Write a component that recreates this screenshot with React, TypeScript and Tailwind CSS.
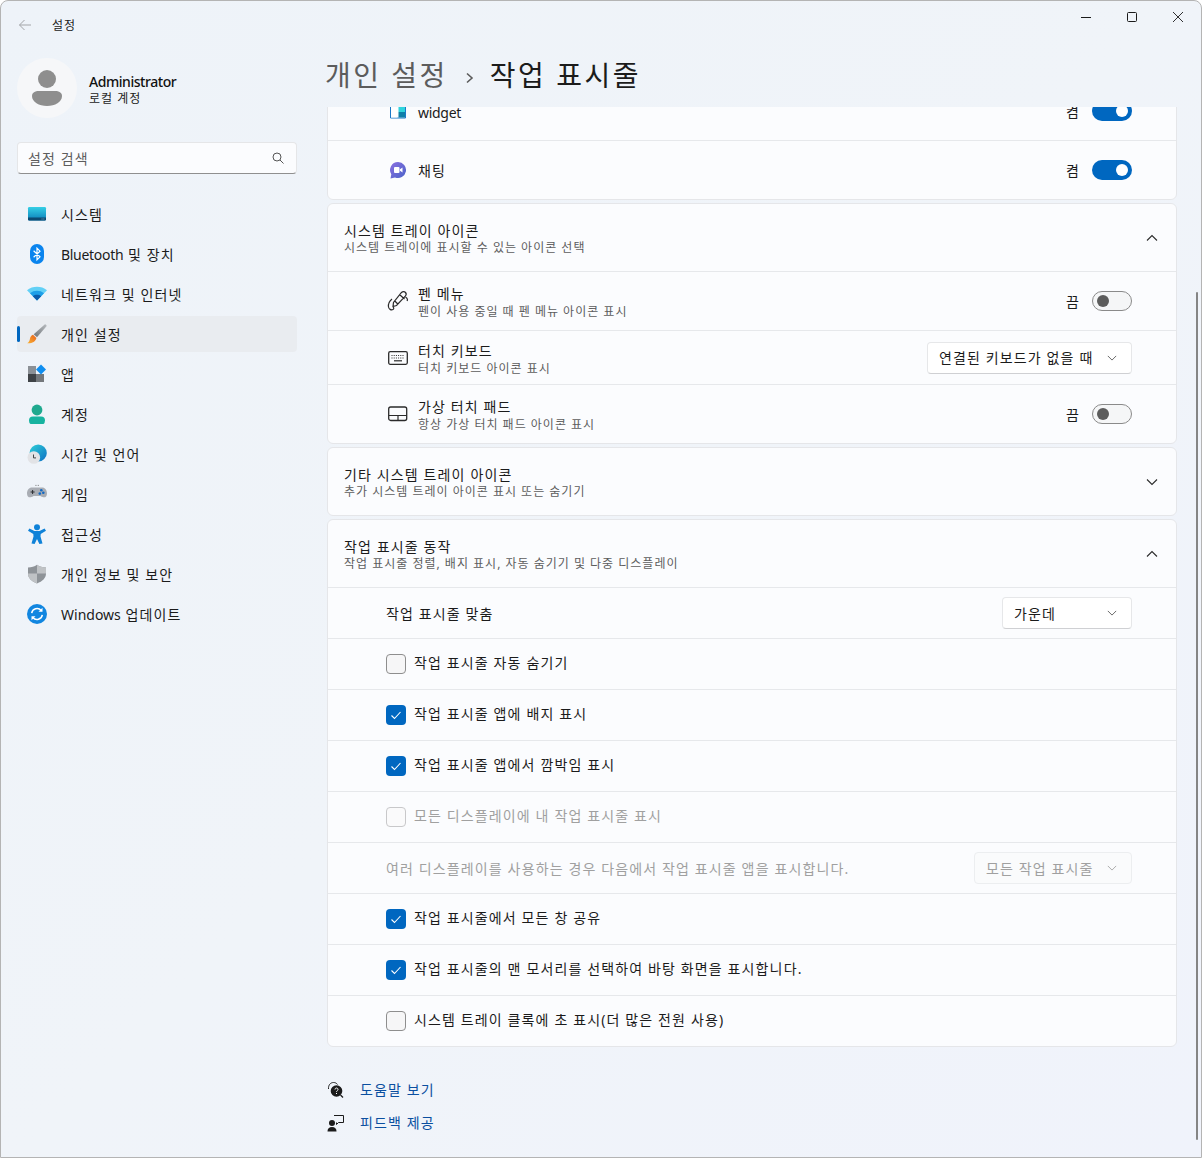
import type { ReactNode } from 'react';

const FONT = 'font-["Noto_Sans","Noto_Sans_CJK_KR",sans-serif]';

const SystemIcon = () => (
    <svg width="20" height="20" viewBox="0 0 20 20">
        <defs>
            <linearGradient id="sys" x1="0" y1="0" x2="0" y2="1">
                <stop offset="0" stopColor="#35cfe6" />
                <stop offset="1" stopColor="#0b7db8" />
            </linearGradient>
        </defs>
        <rect x="1" y="3" width="18" height="13.5" rx="1.2" fill="url(#sys)" />
        <path d="M1 13.500h18v1.800a1.200 1.200 0 0 1-1.200 1.200H2.200A1.200 1.200 0 0 1 1 15.300z" fill="#0c4a72" />
        <path d="M14.600 15h.9M16.400 15h.9" stroke="#8fc6dc" strokeWidth="0.8" />
    </svg>
);

const BluetoothIcon = () => (
    <svg width="20" height="20" viewBox="0 0 20 20">
        <rect x="3" y="0" width="14" height="20" rx="7" fill="#0a84ee" />
        <path d="M6.600 6.700 13 12.800 10 15.800V4.200l3 3L6.600 13.300" fill="none" stroke="#fff" strokeWidth="1.200" />
    </svg>
);

const WifiIcon = () => (
    <svg width="20" height="20" viewBox="0 0 20 20">
        <path d="M0 6.200C5.500 1.600 14.500 1.600 20 6.200L10 16.500z" fill="#62d0f6" />
        <path d="M3 9.300C7 6 13 6 17 9.300L10 16.500z" fill="#1e9fe8" />
        <path d="M5.800 12.200C8.200 10.300 11.800 10.300 14.200 12.200L10 16.500z" fill="#0c5cab" />
    </svg>
);

const BrushIcon = () => (
    <svg width="20" height="20" viewBox="0 0 20 20">
        <defs>
            <linearGradient id="handle" x1="0" y1="1" x2="1" y2="0">
                <stop offset="0" stopColor="#6f7478" />
                <stop offset="1" stopColor="#b8bcc0" />
            </linearGradient>
            <linearGradient id="bristle" x1="0" y1="1" x2="1" y2="0">
                <stop offset="0" stopColor="#f9b233" />
                <stop offset="1" stopColor="#e8611c" />
            </linearGradient>
        </defs>
        <path d="M18 0.200c1 .3 1.600 1 1.700 1.700L10 13.200 6.700 10.200z" fill="url(#handle)" />
        <path d="M6 10.800 9.400 13.900C8.600 17.600 4.600 19.600 0.200 19.200 2.400 17.800 2.600 16.400 3 14.400 3.300 12.700 4.400 11.400 6 10.800z" fill="url(#bristle)" />
    </svg>
);

const AppsIcon = () => (
    <svg width="20" height="20" viewBox="0 0 20 20">
        <rect x="1" y="2" width="8" height="8" fill="#8b9096" />
        <rect x="1" y="10" width="8" height="8" fill="#3f4347" />
        <rect x="9" y="10" width="8" height="8" fill="#74787c" />
        <path d="M14 0.500 19 5.500 14 10.500 9 5.500z" fill="#0f8ef0" />
    </svg>
);

const AccountIcon = () => (
    <svg width="20" height="20" viewBox="0 0 20 20">
        <circle cx="10" cy="6" r="5.400" fill="#1fa98f" />
        <rect x="2" y="12.600" width="16" height="8" rx="4" fill="#17b3a0" />
    </svg>
);

const TimeIcon = () => (
    <svg width="20" height="20" viewBox="0 0 20 20">
        <defs>
            <linearGradient id="globe" x1="0" y1="0" x2="1" y2="1">
                <stop offset="0" stopColor="#2fd0d8" />
                <stop offset="1" stopColor="#0d6fc4" />
            </linearGradient>
        </defs>
        <circle cx="11.200" cy="9" r="8.600" fill="url(#globe)" />
        <circle cx="6.800" cy="13.500" r="6.300" fill="#e2e3e6" />
        <path d="M6.500 10.500v3.400h2.500" fill="none" stroke="#444" strokeWidth="1" />
    </svg>
);

const GameIcon = () => (
    <svg width="20" height="20" viewBox="0 0 20 20">
        <path d="M5 3.400h10c3 0 5 2.600 5 6 0 3.200-2.200 4.600-4.400 3.700-1.200-.5-1.800-1.200-3-1.200H7.400c-1.200 0-1.800.7-3 1.200C2.200 14 0 12.600 0 9.400c0-3.400 2-6 5-6z" fill="#a9adb4" />
        <path d="M3.600 8h4M5.600 6v4" stroke="#2c2f33" strokeWidth="1" />
        <circle cx="14.300" cy="6.300" r="1.300" fill="#1269c4" />
        <circle cx="12.800" cy="9.600" r="1.300" fill="#1269c4" />
        <circle cx="16.300" cy="8.800" r="1.300" fill="#1269c4" />
        <path d="M8.500 1.400h.9M10.800 1.400h.9" stroke="#555" strokeWidth="0.900" />
    </svg>
);

const AccessIcon = () => (
    <svg width="20" height="20" viewBox="0 0 20 20">
        <circle cx="10" cy="3.200" r="3" fill="#0f82d8" />
        <path d="M2.400 4.600 1 6.800 6.300 10 6.500 12.500 4.500 19.400 7.600 20 10 15 12.400 20 15.500 19.400 13.500 12.500 13.700 10 19 6.800 17.600 4.600 12.500 7H7.500z" fill="#0f82d8" />
    </svg>
);

const ShieldIcon = () => (
    <svg width="20" height="20" viewBox="0 0 20 20">
        <path d="M10 0.800C12.500 2.600 15.500 3.400 19 3.400V9.500C19 14 15.500 17.500 10 19.400 4.500 17.500 1 14 1 9.500V3.400C4.500 3.400 7.500 2.600 10 0.800z" fill="#8e9398" />
        <path d="M10 0.800C12.500 2.600 15.500 3.400 19 3.400V9.500H10zM10 9.500V19.400C4.500 17.500 1 14 1 9.500z" fill="#bfc2c5" />
    </svg>
);

const UpdateIcon = () => (
    <svg width="20" height="20" viewBox="0 0 20 20">
        <circle cx="10" cy="10" r="10" fill="#1186e0" />
        <path d="M4.700 9.200A5.400 5.400 0 0 1 14.200 6.500M15.300 10.800A5.400 5.400 0 0 1 5.800 13.500" fill="none" stroke="#fff" strokeWidth="1.500" />
        <path d="M15.500 3.800V7.800H11.500zM4.500 16.200V12.200H8.500z" fill="#fff" />
    </svg>
);

const navItems: { label: ReactNode; key: string; icon: ReactNode; active?: boolean }[] = [
    { key: 'system', label: '시스템', icon: <SystemIcon /> },
    {
        key: 'bluetooth',
        label: (
            <>
                <span className="tracking-[-0.3px]">Bluetooth</span> 및 장치
            </>
        ),
        icon: <BluetoothIcon />,
    },
    { key: 'network', label: '네트워크 및 인터넷', icon: <WifiIcon /> },
    { key: 'personal', label: '개인 설정', icon: <BrushIcon />, active: true },
    { key: 'apps', label: '앱', icon: <AppsIcon /> },
    { key: 'account', label: '계정', icon: <AccountIcon /> },
    { key: 'time', label: '시간 및 언어', icon: <TimeIcon /> },
    { key: 'game', label: '게임', icon: <GameIcon /> },
    { key: 'access', label: '접근성', icon: <AccessIcon /> },
    { key: 'privacy', label: '개인 정보 및 보안', icon: <ShieldIcon /> },
    {
        key: 'update',
        label: (
            <>
                <span className="tracking-normal">Windows</span> 업데이트
            </>
        ),
        icon: <UpdateIcon />,
    },
];

const Chevron = ({ up, className }: { up?: boolean; className: string }) => (
    <svg width="12" height="12" viewBox="0 0 12 12" className={className}>
        <path d={up ? 'M1 8.500 6 3.500l5 5' : 'M1 3.500l5 5 5-5'} fill="none" stroke="currentColor" strokeWidth="1.100" />
    </svg>
);

const Toggle = ({ on }: { on: boolean }) => (
    <div className="flex items-center">
        <span className="w-[26px] text-[14px] text-[#1b1b1b]">{on ? '켬' : '끔'}</span>
        {on ? (
            <div className="flex h-5 w-10 items-center justify-end rounded-full bg-[#0067c0] pr-1">
                <div className="h-3 w-3 rounded-full bg-white" />
            </div>
        ) : (
            <div className="flex h-5 w-10 items-center rounded-full border border-[#8a8a8a] bg-[#f5f6f7] pl-[4px]">
                <div className="h-3 w-3 rounded-full bg-[#5c5c5c]" />
            </div>
        )}
    </div>
);

const Select = ({ label, width, disabled }: { label: string; width: string; disabled?: boolean }) => (
    <div
        className={`flex h-8 items-center justify-between rounded border pl-[11px] pr-[14px] text-[14px] ${width} ${
            disabled
                ? 'border-[#eceef0] bg-[#fafbfc] text-[#a0a0a0]'
                : 'border-[#e6e7e9] border-b-[#cfd0d3] bg-white text-[#1b1b1b]'
        }`}
    >
        <span>{label}</span>
        <Chevron className={`h-[10px] w-[10px] ${disabled ? 'text-[#a5a5a5]' : 'text-[#5d5d5d]'}`} />
    </div>
);

const Check = ({ state }: { state: 'on' | 'off' | 'disabled' }) => {
    if (state === 'on') {
        return (
            <div className="flex h-5 w-5 items-center justify-center rounded bg-[#0067c0]">
                <svg width="12" height="12" viewBox="0 0 12 12">
                    <path d="M1.500 6.500 4.500 9.500 10.500 3" fill="none" stroke="#fff" strokeWidth="1.100" />
                </svg>
            </div>
        );
    }
    return (
        <div className={`h-5 w-5 rounded border ${state === 'off' ? 'border-[#8e8e8e] bg-[#f6f6f7]' : 'border-[#c8c8ca] bg-[#fafafb]'}`} />
    );
};

const CardHeader = ({ title, sub, up }: { title: string; sub: string; up?: boolean }) => (
    <div className="flex h-[67px] items-center justify-between pl-4 pr-[18px]">
        <div className="pt-px">
            <div className="text-[14px] leading-[18px] text-[#1b1b1b]">{title}</div>
            <div className="text-[12px] leading-[15px] tracking-[1px] text-[#5d5d5d]">{sub}</div>
        </div>
        <Chevron up={up} className="text-[#2b2b2b]" />
    </div>
);

const IconRow = ({ icon, title, sub, h, right }: { icon: ReactNode; title: string; sub?: string; h: string; right: ReactNode }) => (
    <div className={`flex items-center justify-between border-t border-[#e6e8eb] pl-[60px] pr-[44px] ${h}`}>
        <div className="flex items-center">
            <div className="mr-[10px] flex h-5 w-5 items-center justify-center">{icon}</div>
            <div className="pt-[2px]">
                <div className="text-[14px] leading-[18px] text-[#1b1b1b]">{title}</div>
                {sub && <div className="mt-px text-[12px] leading-[15px] tracking-[1px] text-[#5d5d5d]">{sub}</div>}
            </div>
        </div>
        {right}
    </div>
);

const CheckRow = ({ state, label }: { state: 'on' | 'off' | 'disabled'; label: string }) => (
    <div className="flex h-[51px] items-center gap-2 border-t border-[#e6e8eb] pl-[58px]">
        <Check state={state} />
        <span className={`pb-[3px] text-[14px] ${state === 'disabled' ? 'text-[#a0a0a0]' : 'text-[#1b1b1b]'}`}>{label}</span>
    </div>
);

const App = () => {
    return (
        <div className={`relative flex h-[1158px] w-[1202px] overflow-hidden rounded-t-lg border border-[#b4b4b4] bg-[linear-gradient(135deg,#eef3f9,#f0f4f9_50%,#f0f3fb)] tracking-[1.13px] ${FONT}`}>
            {/* 左サイドバー */}
            <aside className="flex w-[326px] shrink-0 flex-col">
                <div className="flex h-[48px] items-center pl-[17px]">
                    <svg width="14" height="14" viewBox="0 0 14 14" className="mr-[20px]">
                        <path d="M13 7H1.500M6.500 2 1.500 7l5 5" fill="none" stroke="#a3a5a8" strokeWidth="1" />
                    </svg>
                    <span className="pt-[2px] text-[12px] tracking-[1px] text-[#1b1b1b]">설정</span>
                </div>
                <div className="mt-[9px] flex items-center pl-4">
                    <div className="flex h-[60px] w-[60px] items-center justify-center rounded-full bg-[#f6f7f9]">
                        <svg width="30" height="36" viewBox="0 0 30 36">
                            <circle cx="15" cy="9" r="9" fill="#8e8e8e" />
                            <path d="M7 21h16c4 0 7 1.500 7 5 0 6-7 10-15 10S0 32 0 26c0-3.500 3-5 7-5z" fill="#8e8e8e" />
                        </svg>
                    </div>
                    <div className="ml-3 pt-[3px]">
                        <div className="text-[14px] font-medium leading-[17px] tracking-[-0.45px] text-[#111]">Administrator</div>
                        <div className="mt-px text-[12px] leading-[15px] tracking-[1px] text-[#1b1b1b]">로컬 계정</div>
                    </div>
                </div>
                <div className="ml-4 mr-[30px] mt-6 flex h-8 items-center justify-between rounded border border-[#e5e6e8] border-b-[#8f8f8f] bg-[#fbfcfe] pl-[10px] pr-3">
                    <span className="text-[14px] text-[#5d5d5d]">설정 검색</span>
                    <svg width="12" height="12" viewBox="0 0 12 12">
                        <circle cx="5" cy="5" r="4" fill="none" stroke="#555" strokeWidth="1" />
                        <path d="M8 8l3.500 3.500" stroke="#555" strokeWidth="1" />
                    </svg>
                </div>
                <nav className="ml-4 mr-[30px] mt-[20px] flex flex-col">
                    {navItems.map((item) => (
                        <div key={item.key} className="flex h-10 items-center">
                            <div className={`relative flex h-9 w-full items-center rounded pl-[10px] ${item.active ? 'bg-[#e9ecf0]' : ''}`}>
                                {item.active && <div className="absolute left-0 top-[10px] h-4 w-[3px] rounded-full bg-[#0067c0]" />}
                                {item.icon}
                                <span className="ml-[14px] text-[14px] text-[#1b1b1b]">{item.label}</span>
                            </div>
                        </div>
                    ))}
                </nav>
            </aside>

            {/* メイン */}
            <main className="flex min-w-0 flex-1 flex-col pr-6">
                <div className="-ml-[2px] flex h-[106px] shrink-0 items-end pb-[13px] text-[28px] leading-[38px] tracking-[2.5px]">
                    <span className="text-[#5c5c5c]">개인 설정</span>
                    <svg width="12" height="12" viewBox="0 0 12 12" className="mb-[10px] ml-[16px] mr-[14px]">
                        <path d="M3 1.500 8 6 3 10.500" fill="none" stroke="#5c5c5c" strokeWidth="1.600" />
                    </svg>
                    <span className="text-[#1b1b1b]">작업 표시줄</span>
                </div>
                <div className="min-h-0 flex-1 overflow-hidden">
                    {/* スクロール位置の分だけ上にずらす */}
                    <div className="-mt-[26px] flex flex-col gap-[3px]">
                        <div className="rounded-b-md border border-[#e5e6e9] bg-[#fbfcfe]">
                            <div className="flex h-[58px] items-center justify-between pl-[60px] pr-[44px]">
                                <div className="flex items-center">
                                    <svg width="20" height="20" viewBox="0 0 20 20" className="mr-[10px]">
                                        <path d="M2.500 3v14h15V3" fill="none" stroke="#1a78c8" strokeWidth="1" />
                                        <rect x="3" y="3" width="6.500" height="13.500" fill="#fff" />
                                        <rect x="10.500" y="3" width="6.500" height="8" fill="#2fd4dd" />
                                        <rect x="10.500" y="11" width="6.500" height="5.500" fill="#0f7fa8" />
                                    </svg>
                                    <span className="pt-[3px] text-[14px] leading-none tracking-[-0.3px] text-[#1b1b1b]">widget</span>
                                </div>
                                <Toggle on />
                            </div>
                            <IconRow
                                h="h-[59px]"
                                title="채팅"
                                icon={
                                    <svg width="18" height="18" viewBox="0 0 18 18">
                                        <defs>
                                            <linearGradient id="chat" x1="0" y1="0" x2="1" y2="1">
                                                <stop offset="0" stopColor="#8a6fe0" />
                                                <stop offset="1" stopColor="#4a63c8" />
                                            </linearGradient>
                                        </defs>
                                        <path d="M9 1a8 8 0 1 1-3 15.400L1.500 17.500 2.300 13.300A8 8 0 0 1 9 1z" fill="url(#chat)" />
                                        <rect x="5" y="6" width="5.500" height="6" rx="1" fill="#fff" />
                                        <path d="M11 8.200 13.500 6.500v5L11 9.800z" fill="#fff" />
                                    </svg>
                                }
                                right={<Toggle on />}
                            />
                        </div>

                        <div className="rounded-md border border-[#e5e6e9] bg-[#fbfcfe]">
                            <CardHeader up title="시스템 트레이 아이콘" sub="시스템 트레이에 표시할 수 있는 아이콘 선택" />
                            <IconRow
                                h="h-[59px]"
                                title="펜 메뉴"
                                sub="펜이 사용 중일 때 펜 메뉴 아이콘 표시"
                                icon={
                                    <svg width="22" height="22" viewBox="0 0 22 22" className="shrink-0">
                                        <path d="M14.500 2.500c1.200-1.200 3-1.200 4 0s.8 2.600-.2 3.700L9.500 15.500 6 16.500 6.500 12.500z M12.500 4.500l5 4.500M7.800 11l3 3" fill="none" stroke="#2b2b2b" strokeWidth="1.200" />
                                        <path d="M5 9C2.500 11 1 14 1.500 17c.3 2 2.500 3.500 4.500 2.500 1-.5 1-2 0-2.500" fill="none" stroke="#2b2b2b" strokeWidth="1.200" />
                                        <path d="M18.500 7c1.500 1 2.500 2.500 1.500 4" fill="none" stroke="#2b2b2b" strokeWidth="1.200" />
                                    </svg>
                                }
                                right={<Toggle on={false} />}
                            />
                            <IconRow
                                h="h-[54px]"
                                title="터치 키보드"
                                sub="터치 키보드 아이콘 표시"
                                icon={
                                    <svg width="20" height="20" viewBox="0 0 20 20">
                                        <rect x="0.700" y="3.700" width="18.600" height="12.600" rx="1.500" fill="none" stroke="#2b2b2b" strokeWidth="1.300" />
                                        <path d="M3.500 7.500h13M3.500 10h13" stroke="#2b2b2b" strokeWidth="1.200" strokeDasharray="1 1.200" />
                                        <path d="M6 12.800h8" stroke="#2b2b2b" strokeWidth="1.200" />
                                    </svg>
                                }
                                right={<Select label="연결된 키보드가 없을 때" width="w-[205px]" />}
                            />
                            <IconRow
                                h="h-[59px]"
                                title="가상 터치 패드"
                                sub="항상 가상 터치 패드 아이콘 표시"
                                icon={
                                    <svg width="20" height="20" viewBox="0 0 20 20">
                                        <rect x="0.700" y="3" width="18" height="13.500" rx="2" fill="none" stroke="#2b2b2b" strokeWidth="1.300" />
                                        <path d="M1 11.500h18M10 11.500v5" stroke="#2b2b2b" strokeWidth="1.200" />
                                    </svg>
                                }
                                right={<Toggle on={false} />}
                            />
                        </div>

                        <div className="rounded-md border border-[#e5e6e9] bg-[#fbfcfe]">
                            <CardHeader title="기타 시스템 트레이 아이콘" sub="추가 시스템 트레이 아이콘 표시 또는 숨기기" />
                        </div>

                        <div className="rounded-md border border-[#e5e6e9] bg-[#fbfcfe]">
                            <CardHeader up title="작업 표시줄 동작" sub="작업 표시줄 정렬, 배지 표시, 자동 숨기기 및 다중 디스플레이" />
                            <div className="flex h-[51px] items-center justify-between border-t border-[#e6e8eb] pl-[58px] pr-[44px]">
                                <span className="text-[14px] text-[#1b1b1b]">작업 표시줄 맞춤</span>
                                <Select label="가운데" width="w-[130px]" />
                            </div>
                            <CheckRow state="off" label="작업 표시줄 자동 숨기기" />
                            <CheckRow state="on" label="작업 표시줄 앱에 배지 표시" />
                            <CheckRow state="on" label="작업 표시줄 앱에서 깜박임 표시" />
                            <CheckRow state="disabled" label="모든 디스플레이에 내 작업 표시줄 표시" />
                            <div className="flex h-[51px] items-center justify-between border-t border-[#e6e8eb] pl-[58px] pr-[44px]">
                                <span className="text-[14px] text-[#a0a0a0]">여러 디스플레이를 사용하는 경우 다음에서 작업 표시줄 앱을 표시합니다.</span>
                                <Select disabled label="모든 작업 표시줄" width="w-[158px]" />
                            </div>
                            <CheckRow state="on" label="작업 표시줄에서 모든 창 공유" />
                            <CheckRow state="on" label="작업 표시줄의 맨 모서리를 선택하여 바탕 화면을 표시합니다." />
                            <CheckRow state="off" label="시스템 트레이 클록에 초 표시(더 많은 전원 사용)" />
                        </div>

                        <div className="mt-[23px] flex flex-col">
                            <div className="flex h-[33px] items-center">
                                <svg width="18" height="18" viewBox="0 0 18 18" className="mr-[15px]">
                                    <path d="M1.500 8C1.200 4 3.500 1.500 6.500 1.500c1.800 0 3 .7 4 2" fill="none" stroke="#222" strokeWidth="1" />
                                    <circle cx="9.500" cy="10" r="5.800" fill="#1b1b1b" />
                                    <path d="M13.500 14l2.500 2.500" stroke="#1b1b1b" strokeWidth="1.200" />
                                    <path d="M8 8.500c0-2 3-2 3 0 0 1.200-1.500 1.200-1.500 2.400M9.500 12v1" fill="none" stroke="#fff" strokeWidth="1" />
                                </svg>
                                <span className="text-[14px] text-[#0b4fa0]">도움말 보기</span>
                            </div>
                            <div className="flex h-[33px] items-center">
                                <svg width="18" height="18" viewBox="0 0 18 18" className="mr-[15px]">
                                    <circle cx="5" cy="9" r="3" fill="#1b1b1b" />
                                    <path d="M0.500 17.500c0-3 1.500-4.500 4.500-4.500s4.500 1.500 4.500 4.500z" fill="#1b1b1b" />
                                    <path d="M7 1.500h9.500v7h-5L9.500 10.500V8.500" fill="none" stroke="#1b1b1b" strokeWidth="1" />
                                </svg>
                                <span className="text-[14px] text-[#0b4fa0]">피드백 제공</span>
                            </div>
                        </div>
                    </div>
                </div>
            </main>

            {/* タイトルバーのボタン */}
            <div className="absolute right-[18px] top-[11px] flex items-center gap-[36px]">
                <svg width="10" height="10" viewBox="0 0 10 10">
                    <path d="M0 5.500h10" stroke="#1b1b1b" strokeWidth="1" />
                </svg>
                <svg width="10" height="10" viewBox="0 0 10 10">
                    <rect x="0.500" y="0.500" width="9" height="9" rx="1" fill="none" stroke="#1b1b1b" strokeWidth="1" />
                </svg>
                <svg width="10" height="10" viewBox="0 0 10 10">
                    <path d="M0 0l10 10M10 0 0 10" stroke="#1b1b1b" strokeWidth="0.900" />
                </svg>
            </div>

            {/* スクロールバー */}
            <div className="absolute right-[3px] top-[291px] h-[848px] w-[2px] rounded-full bg-[#858585]" />
        </div>
    );
};

export default App;
